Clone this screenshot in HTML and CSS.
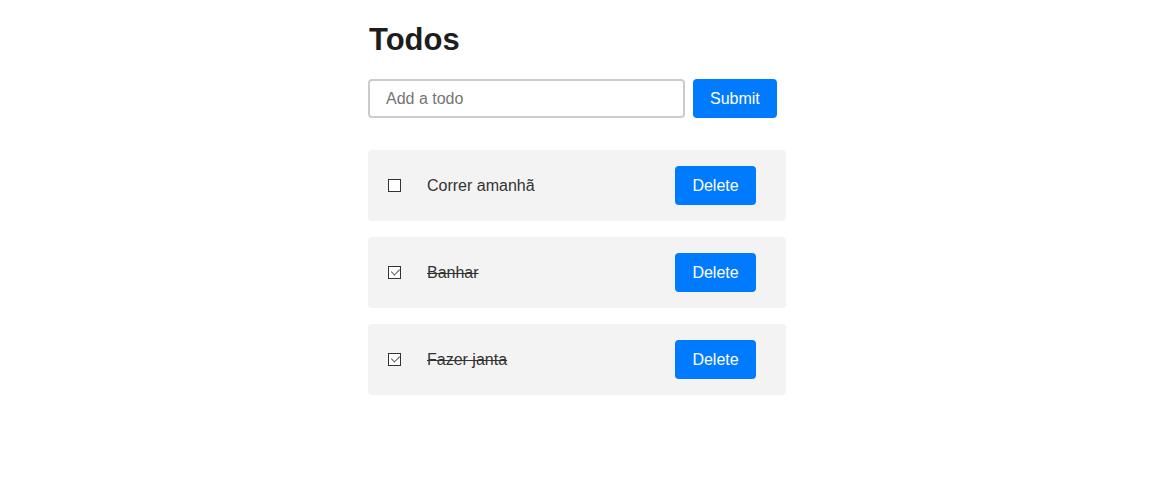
FILE: index.html
```html
<!DOCTYPE html>
<html lang="pt">
<head>
<meta charset="utf-8">
<title>Todos</title>
<link rel="stylesheet" href="styles.css">
</head>
<body>
<div class="app">
  <h1 class="title">Todos</h1>
  <form class="add-form">
    <input class="add-input" type="text" placeholder="Add a todo">
    <button class="btn" type="button">Submit</button>
  </form>
  <ul class="todo-list">
    <li class="todo">
      <input class="todo-check" type="checkbox">
      <span class="todo-text">Correr amanhã</span>
      <button class="btn btn-delete" type="button">Delete</button>
    </li>
    <li class="todo">
      <input class="todo-check" type="checkbox" checked>
      <span class="todo-text done">Banhar</span>
      <button class="btn btn-delete" type="button">Delete</button>
    </li>
    <li class="todo">
      <input class="todo-check" type="checkbox" checked>
      <span class="todo-text done">Fazer janta</span>
      <button class="btn btn-delete" type="button">Delete</button>
    </li>
  </ul>
</div>
</body>
</html>
```

FILE: styles.css
```css
html, body {
  margin: 0;
  padding: 0;
  background: #ffffff;
}

body {
  font-family: "Liberation Sans", Arial, sans-serif;
  color: #222;
}

.app {
  width: 437px;
  margin: 0 auto;
  padding-top: 18px;
}

.title {
  margin: 3px 0 21px 1px;
  font-size: 31px;
  font-weight: bold;
  line-height: 37px;
  color: #1d1d1d;
}

.add-form {
  display: flex;
  gap: 8px;
  margin: 0 0 32px 0;
}

.add-input {
  box-sizing: border-box;
  width: 317px;
  height: 39px;
  padding: 0 16px;
  border: 2px solid #cccccc;
  border-radius: 4px;
  font-family: "Liberation Sans", Arial, sans-serif;
  font-size: 16px;
  color: #333;
  outline: none;
}

.add-input::placeholder {
  color: #757575;
}

.btn {
  box-sizing: border-box;
  height: 39px;
  padding: 0 17px;
  border: none;
  border-radius: 4px;
  background: #007bff;
  color: #ffffff;
  font-family: "Liberation Sans", Arial, sans-serif;
  font-size: 16px;
  cursor: pointer;
}

.todo-list {
  list-style: none;
  margin: 0;
  padding: 0;
  width: 418px;
  display: flex;
  flex-direction: column;
  gap: 16px;
}

.todo {
  display: flex;
  align-items: center;
  background: #f3f3f3;
  border-radius: 4px;
  padding: 16px;
  height: 71px;
  box-sizing: border-box;
}

.todo-check {
  appearance: none;
  -webkit-appearance: none;
  position: relative;
  box-sizing: border-box;
  width: 13px;
  height: 13px;
  margin: 0 26px 0 4px;
  border: 1px solid #333333;
  background: #ffffff;
  border-radius: 0;
}

.todo-check:checked::after {
  content: "";
  position: absolute;
  left: 4px;
  top: 0px;
  width: 4px;
  height: 7px;
  border-right: 1px solid #555555;
  border-bottom: 1px solid #555555;
  transform: rotate(45deg);
  transform-origin: center;
}

.todo-text {
  flex: 1;
  font-size: 16px;
  color: #333;
}

.todo-text.done {
  text-decoration: line-through;
}

.btn-delete {
  margin-right: 14px;
  width: 81px;
  padding: 0;
}
```
